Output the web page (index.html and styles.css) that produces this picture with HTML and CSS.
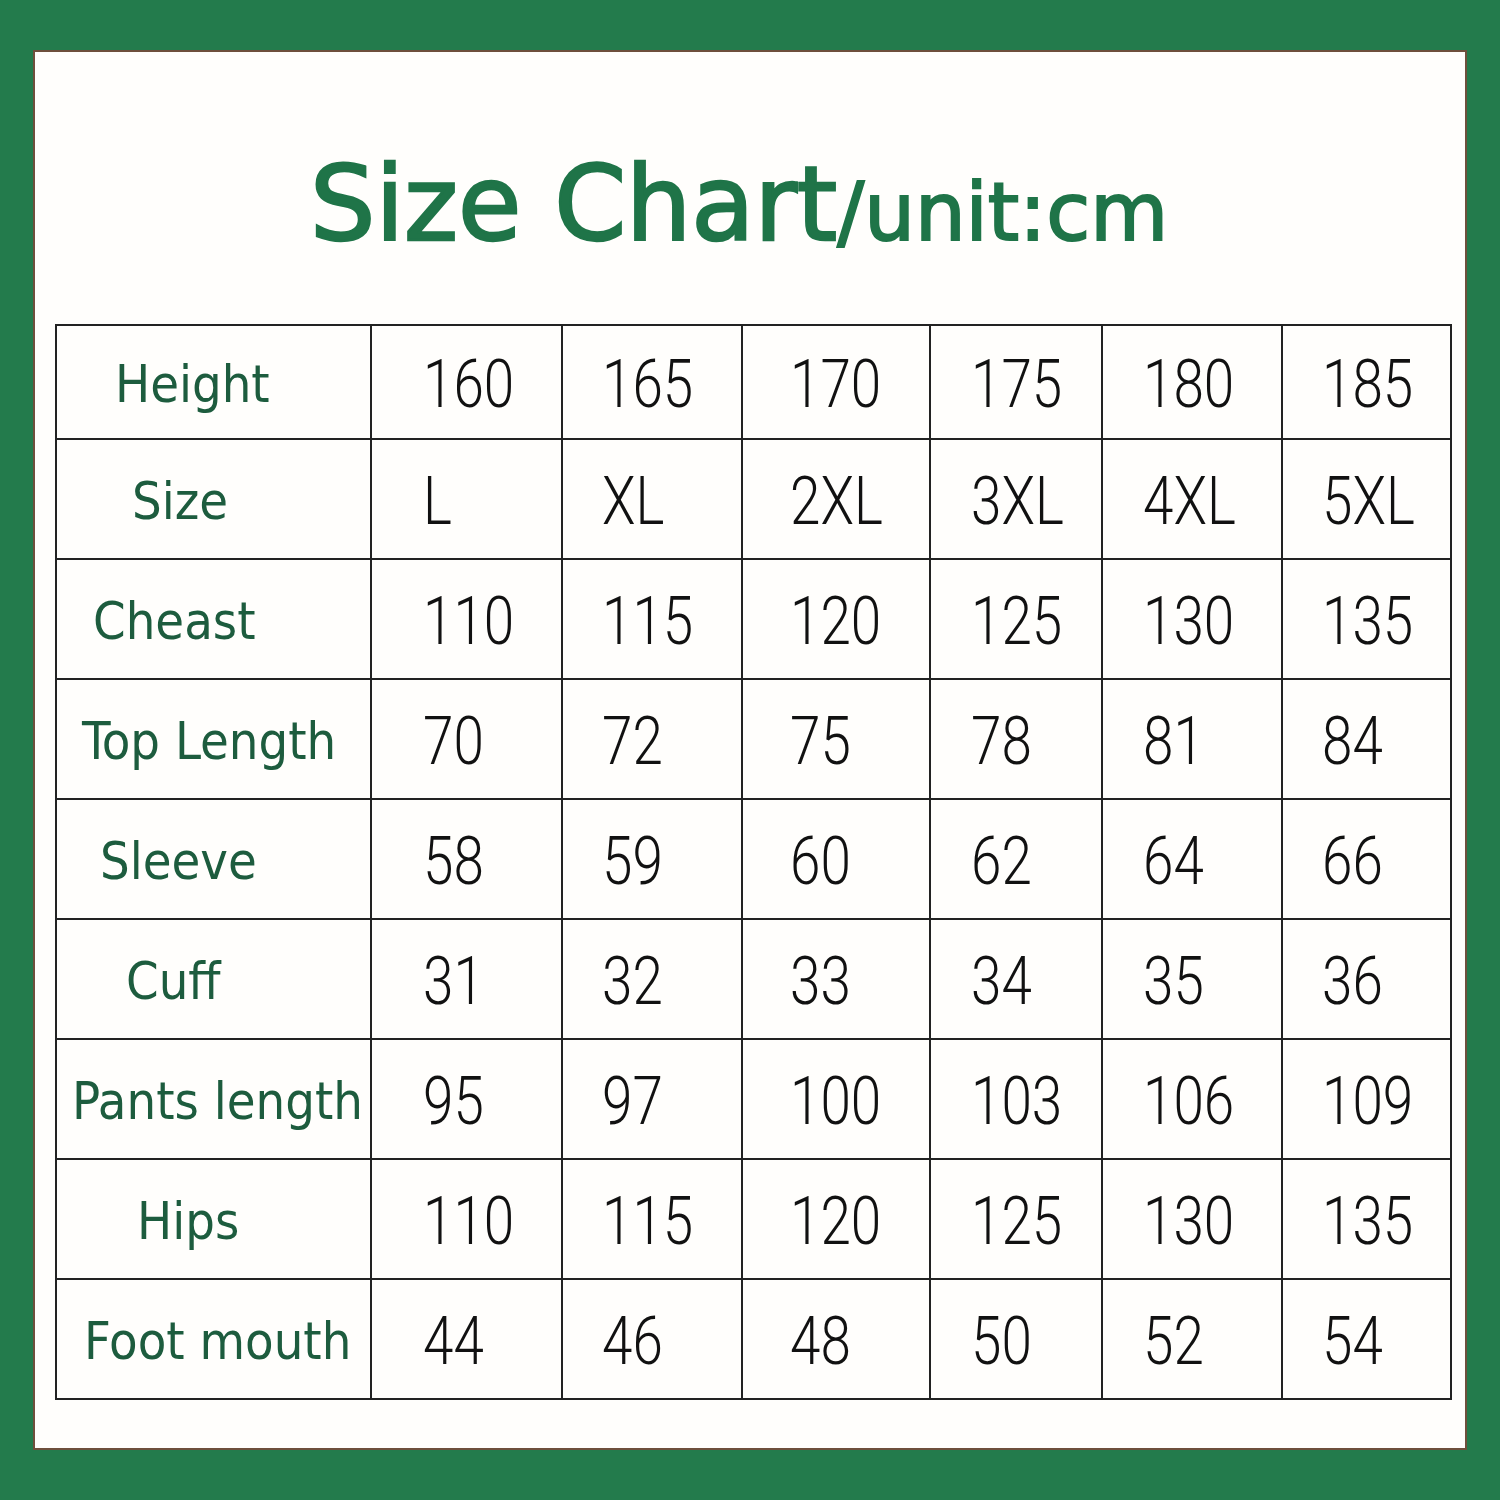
FILE: index.html
```html
<!DOCTYPE html>
<html>
<head>
<meta charset="utf-8">
<link rel="stylesheet" href="styles.css">
</head>
<body>
<div class="frame">
  <div class="title"><span class="big">Size Chart</span><span class="small">/unit:cm</span></div>
  <table class="chart">
    <tr><td class="lbl">Height</td><td><span class="n">160</span></td><td><span class="n">165</span></td><td><span class="n">170</span></td><td><span class="n">175</span></td><td><span class="n">180</span></td><td><span class="n">185</span></td></tr>
    <tr><td class="lbl">Size</td><td><span class="n">L</span></td><td><span class="n">XL</span></td><td><span class="n">2XL</span></td><td><span class="n">3XL</span></td><td><span class="n">4XL</span></td><td><span class="n">5XL</span></td></tr>
    <tr><td class="lbl">Cheast</td><td><span class="n">110</span></td><td><span class="n">115</span></td><td><span class="n">120</span></td><td><span class="n">125</span></td><td><span class="n">130</span></td><td><span class="n">135</span></td></tr>
    <tr><td class="lbl">Top Length</td><td><span class="n">70</span></td><td><span class="n">72</span></td><td><span class="n">75</span></td><td><span class="n">78</span></td><td><span class="n">81</span></td><td><span class="n">84</span></td></tr>
    <tr><td class="lbl">Sleeve</td><td><span class="n">58</span></td><td><span class="n">59</span></td><td><span class="n">60</span></td><td><span class="n">62</span></td><td><span class="n">64</span></td><td><span class="n">66</span></td></tr>
    <tr><td class="lbl">Cuff</td><td><span class="n">31</span></td><td><span class="n">32</span></td><td><span class="n">33</span></td><td><span class="n">34</span></td><td><span class="n">35</span></td><td><span class="n">36</span></td></tr>
    <tr><td class="lbl">Pants length</td><td><span class="n">95</span></td><td><span class="n">97</span></td><td><span class="n">100</span></td><td><span class="n">103</span></td><td><span class="n">106</span></td><td><span class="n">109</span></td></tr>
    <tr><td class="lbl">Hips</td><td><span class="n">110</span></td><td><span class="n">115</span></td><td><span class="n">120</span></td><td><span class="n">125</span></td><td><span class="n">130</span></td><td><span class="n">135</span></td></tr>
    <tr><td class="lbl">Foot mouth</td><td><span class="n">44</span></td><td><span class="n">46</span></td><td><span class="n">48</span></td><td><span class="n">50</span></td><td><span class="n">52</span></td><td><span class="n">54</span></td></tr>
  </table>
</div>
</body>
</html>
```

FILE: styles.css
```css
html, body {
  margin: 0;
  padding: 0;
}
body {
  background: #237b4c;
  width: 1500px;
  height: 1500px;
  padding: 50px 33px;
  box-sizing: border-box;
}
.frame {
  width: 1434px;
  height: 1400px;
  box-sizing: border-box;
  background: #fffefc;
  border: 2px solid #6e4f3c;
}
.title {
  height: 272px;
  box-sizing: border-box;
  padding-top: 101px;
  padding-left: 275px;
  white-space: nowrap;
  color: #1f7448;
  font-family: "DejaVu Sans", sans-serif;
  line-height: 1;
}
.title .big {
  font-size: 103px;
  -webkit-text-stroke: 2.5px #1f7448;
}
.title .small {
  font-size: 80px;
  -webkit-text-stroke: 2px #1f7448;
}
.chart {
  margin-left: 20px;
  border-collapse: collapse;
  table-layout: fixed;
  width: 1395px;
}
.chart td {
  border: 2px solid #222;
  padding: 5px 0 0 0;
  vertical-align: middle;
  height: 120px;
  box-sizing: border-box;
  white-space: nowrap;
}
.chart tr:first-child td { height: 114px; }
.chart td:nth-child(1) { width: 315px; }
.chart td:nth-child(2) { width: 191px; padding-left: 51px; }
.chart td:nth-child(3) { width: 180px; padding-left: 39px; }
.chart td:nth-child(4) { width: 188px; padding-left: 47px; }
.chart td:nth-child(5) { width: 172px; padding-left: 40px; }
.chart td:nth-child(6) { width: 180px; padding-left: 40px; }
.chart td:nth-child(7) { width: 169px; padding-left: 39px; }
.chart td.lbl {
  padding-top: 3px;
  font-family: "DejaVu Sans Condensed", "DejaVu Sans", sans-serif;
  font-stretch: condensed;
  font-size: 52px;
  color: #1d5c3e;
}
.chart tr:nth-child(1) .lbl { padding-left: 58px; }
.chart tr:nth-child(2) .lbl { padding-left: 75px; }
.chart tr:nth-child(3) .lbl { padding-left: 36px; }
.chart tr:nth-child(4) .lbl { padding-left: 25px; }
.chart tr:nth-child(5) .lbl { padding-left: 43px; }
.chart tr:nth-child(6) .lbl { padding-left: 69px; }
.chart tr:nth-child(7) .lbl { padding-left: 15px; }
.chart tr:nth-child(8) .lbl { padding-left: 80px; }
.chart tr:nth-child(9) .lbl { padding-left: 27px; }
.n {
  display: inline-block;
  font-family: Roboto, "Liberation Sans", sans-serif;
  font-weight: 300;
  font-size: 66px;
  color: #111;
  transform: scaleX(0.83);
  transform-origin: left center;
  line-height: 1;
}
```
